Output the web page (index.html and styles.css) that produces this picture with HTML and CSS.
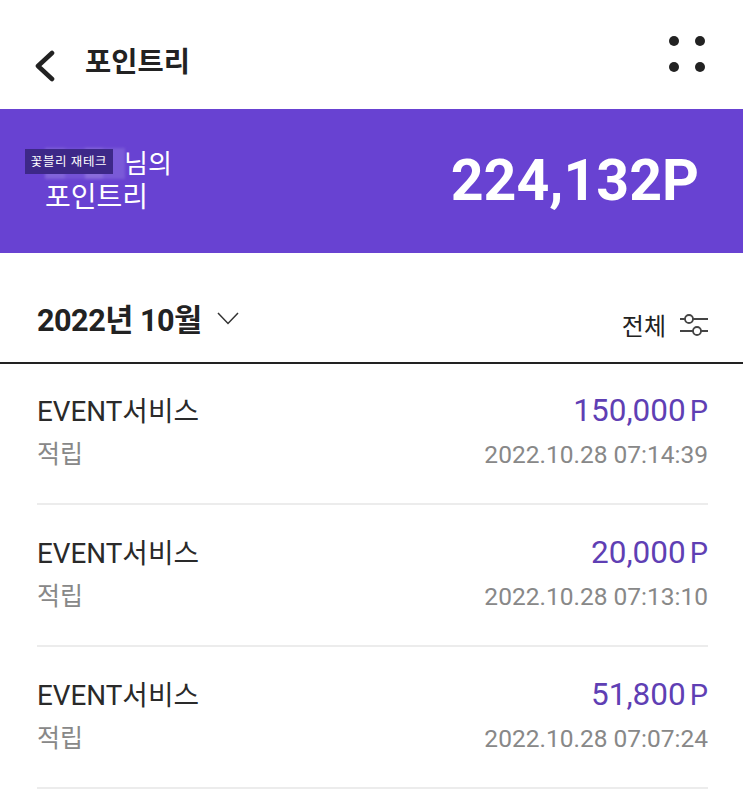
FILE: index.html
```html
<!DOCTYPE html>
<html lang="ko">
<head>
<meta charset="utf-8">
<title>포인트리</title>
<link rel="stylesheet" href="styles.css">
</head>
<body>
<header class="topbar">
  <div class="topbar-left">
    <svg class="back" width="22" height="32" viewBox="0 0 22 32"><path d="M18 3 L4 16 L18 29" fill="none" stroke="#222" stroke-width="4.600" stroke-linecap="round" stroke-linejoin="round"/></svg>
    <h1 class="title">포인트리</h1>
  </div>
  <svg class="menu" width="38" height="38" viewBox="0 0 38 38"><circle cx="6" cy="6" r="5" fill="#222"/><circle cx="32" cy="6" r="5" fill="#222"/><circle cx="6" cy="32" r="5" fill="#222"/><circle cx="32" cy="32" r="5" fill="#222"/></svg>
</header>
<section class="banner">
  <div class="owner">
    <div class="owner-line">
      <span class="mask">
        <span class="blur"></span>
        <span class="sticker">꽃블리 재테크</span>
      </span>
      <span class="suffix">님의</span>
    </div>
    <div class="owner-line2">포인트리</div>
  </div>
  <div class="total">224,132P</div>
</section>
<section class="filter">
  <div class="month">
    <span>2022년 10월</span>
    <svg width="22" height="13" viewBox="0 0 22 13"><path d="M1 1 L11 11.500 L21 1" fill="none" stroke="#333" stroke-width="1.500"/></svg>
  </div>
  <div class="scope">
    <span>전체</span>
    <svg width="28" height="24" viewBox="0 0 28 24"><g fill="none" stroke="#444" stroke-width="1.800"><path d="M0 6 H5 M13 6 H28 M0 18 H13 M21 18 H28"/><circle cx="9" cy="6" r="4"/><circle cx="17" cy="18" r="4"/></g></svg>
  </div>
</section>
<ul class="list">
  <li class="row">
    <div class="cell"><span class="name">EVENT서비스</span><span class="amount">150,000<small>P</small></span></div>
    <div class="cell sub"><span class="type">적립</span><span class="time">2022.10.28 07:14:39</span></div>
  </li>
  <li class="row">
    <div class="cell"><span class="name">EVENT서비스</span><span class="amount">20,000<small>P</small></span></div>
    <div class="cell sub"><span class="type">적립</span><span class="time">2022.10.28 07:13:10</span></div>
  </li>
  <li class="row">
    <div class="cell"><span class="name">EVENT서비스</span><span class="amount">51,800<small>P</small></span></div>
    <div class="cell sub"><span class="type">적립</span><span class="time">2022.10.28 07:07:24</span></div>
  </li>
</ul>
</body>
</html>
```
FILE: styles.css
```css
* { box-sizing: border-box; }
html, body { margin: 0; padding: 0; height: 795px; overflow: hidden; background: #fff; }
body { font-family: Roboto, "Noto Sans CJK KR", sans-serif; color: #222; }
.topbar { height: 109px; display: flex; align-items: center; justify-content: space-between; padding: 16px 37px 0 34px; }
.topbar-left { display: flex; align-items: center; gap: 29px; }
.back { display: block; margin-top: 6px; }
.title { margin: 0; font-size: 28.500px; font-weight: 700; line-height: 32px; margin-top: 1px; }
.menu { display: block; margin-top: -17px; }
.banner { height: 144px; background: #6842d2; color: #fff; display: flex; justify-content: space-between; align-items: center; padding: 0 44px 0 25px; }
.owner { font-size: 28px; line-height: 33px; font-weight: 400; margin-top: -1px; }
.owner-line { display: flex; align-items: center; }
.suffix { font-size: 26px; }
.owner-line2 { padding-left: 20px; }
.mask { position: relative; display: block; width: 99px; height: 31px; }
.blur { position: absolute; left: 20px; top: -1px; width: 80px; height: 31px; filter: blur(1.500px); background: linear-gradient(90deg, #8264da 0 25%, #7452d6 25% 50%, #8a6cdc 50% 72%, #7a5ad8 72% 100%); }
.sticker { position: absolute; left: 0; top: 0; width: 88px; height: 25px; background: #3d2888; color: #fff; font-size: 12.500px; line-height: 25px; font-weight: 400; letter-spacing: 0.600px; text-align: center; white-space: nowrap; }
.total { font-size: 57.300px; font-weight: 700; line-height: 68px; }
.filter { height: 111px; border-bottom: 2px solid #222; display: flex; justify-content: space-between; align-items: center; padding: 26px 35px 0 37px; }
.month { display: flex; align-items: center; gap: 15px; font-size: 30.600px; font-weight: 700; letter-spacing: -0.500px; margin-top: -5px; }
.month svg { margin-top: 1px; }
.scope { display: flex; align-items: center; gap: 14px; font-size: 24px; margin-top: 8px; }
.list { list-style: none; margin: 0; padding: 0 35px 0 37px; }
.row { height: 142px; border-bottom: 2px solid #ececec; padding-top: 26px; }
.row:first-child { height: 141px; padding-top: 25px; }
.cell { display: flex; justify-content: space-between; align-items: baseline; height: 42px; }
.name { font-size: 27.800px; color: #2a2a2a; }
.amount { font-size: 31.500px; color: #5f3fb4; }
.amount small { font-size: 29px; margin-left: 4px; }
.type { font-size: 25px; color: #888; }
.time { font-size: 24.500px; color: #888; }
.sub { padding-top: 3px; }
```
